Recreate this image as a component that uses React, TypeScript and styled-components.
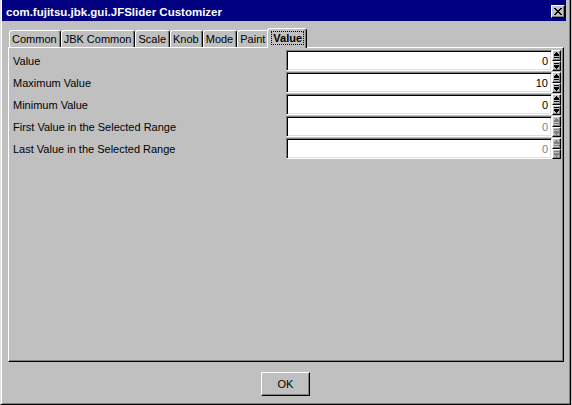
import React from "react";
import styled, { createGlobalStyle } from "styled-components";

const Global = createGlobalStyle`
  html, body { margin: 0; padding: 0; background: #c0c0c0; }
  body { font-family: "Liberation Sans", Arial, sans-serif; font-size: 11px; color: #000; }
  * { box-sizing: border-box; }
`;

const Window = styled.div`
  width: 571px;
  height: 405px;
  display: flex;
  flex-direction: column;
  background: #c0c0c0;
  border-left: 1px solid #dfdfdf;
  border-right: 1px solid #000;
  border-bottom: 1px solid #000;
  box-shadow: inset 1px 0 #fff, inset -1px -1px #808080;
`;

const TitleBar = styled.div`
  height: 21px;
  margin: 0 4px 0 1px;
  padding: 2px 1px 0 4px;
  background: #000080;
  display: flex;
  align-items: center;
  justify-content: space-between;
`;

const TitleText = styled.span`
  color: #fff;
  font-weight: bold;
  font-size: 11.5px;
  white-space: nowrap;
`;

const CloseButton = styled.button`
  width: 14px;
  height: 13px;
  padding: 0;
  margin: 0;
  background: #c0c0c0;
  border: 1px solid;
  border-color: #fff #000 #000 #fff;
  box-shadow: inset -1px -1px #808080;
  display: flex;
  align-items: center;
  justify-content: center;
`;

const Body = styled.div`
  flex: 1;
  display: flex;
  flex-direction: column;
  padding: 7px 6px 0 7px;
`;

const TabStrip = styled.div`
  height: 19px;
  display: flex;
  align-items: flex-end;
  padding-left: 1px;
  position: relative;
  z-index: 1;
`;

const Tab = styled.div<{ $active?: boolean }>`
  height: ${(p) => (p.$active ? 20 : 17)}px;
  margin: ${(p) => (p.$active ? "0 -2px -1px" : "0")};
  padding: ${(p) => (p.$active ? "2px 3px 0 4px" : "1px 3px 0 2px")};
  background: #c0c0c0;
  border-top: 1px solid #fff;
  border-left: 1px solid #fff;
  border-right: 1px solid #000;
  border-radius: 3px 3px 0 0;
  box-shadow: inset -1px 0 #808080;
  position: relative;
  z-index: ${(p) => (p.$active ? 2 : 0)};
  font-weight: ${(p) => (p.$active ? "bold" : "normal")};
  line-height: 14px;
  white-space: nowrap;
`;

const Focus = styled.span`
  outline: 1px dotted #000;
  outline-offset: 0;
  padding: 0 1px;
`;

const Panel = styled.div`
  flex: 1;
  border: 1px solid;
  border-color: #fff #000 #000 #fff;
  box-shadow: inset -1px -1px #808080;
  padding: 2px 2px 0 4px;
  display: grid;
  grid-template-columns: 1fr 266px 9px;
  grid-auto-rows: 21px;
  row-gap: 1px;
  align-content: start;
`;

const Label = styled.div`
  align-self: center;
  white-space: nowrap;
`;

const Field = styled.div<{ $disabled?: boolean }>`
  background: #fff;
  border: 1px solid;
  border-color: #808080 #fff #fff #808080;
  box-shadow: inset 1px 1px #000, inset -1px -1px #dfdfdf;
  display: flex;
  align-items: center;
  justify-content: flex-end;
  padding: 1px 3px 0 0;
  color: ${(p) => (p.$disabled ? "#808080" : "#000")};
`;

const Spinner = styled.div`
  display: flex;
  flex-direction: column;
`;

const SpinButton = styled.div`
  flex: 1;
  background: #c0c0c0;
  border: 1px solid;
  border-color: #fff #000 #000 #fff;
  box-shadow: inset -1px -1px #808080;
  display: flex;
  align-items: center;
  justify-content: center;
  padding-right: 1px;
`;

const Footer = styled.div`
  height: 42px;
  display: flex;
  justify-content: center;
  padding-top: 10px;
`;

const OkButton = styled.button`
  width: 49px;
  height: 24px;
  padding: 0;
  background: #c0c0c0;
  border: 1px solid;
  border-color: #fff #000 #000 #fff;
  box-shadow: inset -1px -1px #808080;
  font-family: "Liberation Sans", Arial, sans-serif;
  font-size: 11px;
  color: #000;
`;

const Arrow = ({ up, disabled }: { up: boolean; disabled?: boolean }) => {
  const c = disabled ? "#808080" : "#000";
  return (
    <svg width="5" height="6" viewBox="0 0 5 6" shapeRendering="crispEdges">
      {up ? (
        <g fill={c}>
          <rect x="2" y="0" width="1" height="1" />
          <rect x="1" y="1" width="3" height="1" />
          <rect x="0" y="2" width="5" height="2" />
          <rect x="0" y="5" width="5" height="1" />
        </g>
      ) : (
        <g fill={c}>
          <rect x="0" y="0" width="5" height="1" />
          <rect x="0" y="2" width="5" height="2" />
          <rect x="1" y="4" width="3" height="1" />
          <rect x="2" y="5" width="1" height="1" />
        </g>
      )}
    </svg>
  );
};

const rows = [
  { label: "Value", value: "0" },
  { label: "Maximum Value", value: "10" },
  { label: "Minimum Value", value: "0" },
  { label: "First Value in the Selected Range", value: "0", disabled: true },
  { label: "Last Value in the Selected Range", value: "0", disabled: true },
];

const tabs = ["Common", "JBK Common", "Scale", "Knob", "Mode", "Paint", "Value"];

export default function App() {
  return (
    <>
      <Global />
      <Window>
        <TitleBar>
          <TitleText>com.fujitsu.jbk.gui.JFSlider Customizer</TitleText>
          <CloseButton>
            <svg width="8" height="7" viewBox="0 0 8 7" shapeRendering="crispEdges">
              <path d="M0 0h2v1h-2zM6 0h2v1h-2zM1 1h2v1h-2zM5 1h2v1h-2zM2 2h4v1h-4zM3 3h2v1h-2zM2 4h4v1h-4zM1 5h2v1h-2zM5 5h2v1h-2zM0 6h2v1h-2zM6 6h2v1h-2z" fill="#000" />
            </svg>
          </CloseButton>
        </TitleBar>
        <Body>
          <TabStrip>
            {tabs.map((t) =>
              t === "Value" ? (
                <Tab key={t} $active>
                  <Focus>{t}</Focus>
                </Tab>
              ) : (
                <Tab key={t}>{t}</Tab>
              )
            )}
          </TabStrip>
          <Panel>
            {rows.map((r) => (
              <React.Fragment key={r.label}>
                <Label>{r.label}</Label>
                <Field $disabled={r.disabled}>{r.value}</Field>
                <Spinner>
                  <SpinButton>
                    <Arrow up disabled={r.disabled} />
                  </SpinButton>
                  <SpinButton>
                    <Arrow up={false} disabled={r.disabled} />
                  </SpinButton>
                </Spinner>
              </React.Fragment>
            ))}
          </Panel>
        </Body>
        <Footer>
          <OkButton>OK</OkButton>
        </Footer>
      </Window>
    </>
  );
}
